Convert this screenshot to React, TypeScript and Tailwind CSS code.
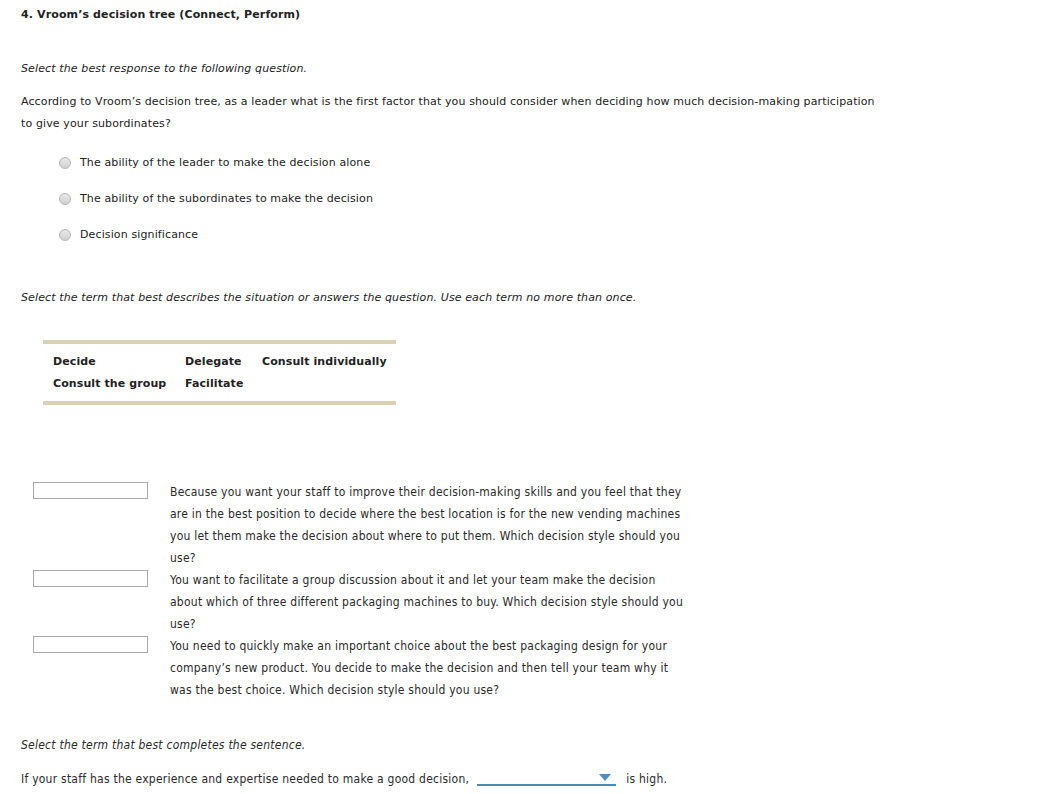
const VERDANA = "font-['DejaVu_Sans',Verdana,sans-serif] tracking-[0.12px]";

function Radio() {
  return (
    <span className="inline-block w-[12px] h-[12px] rounded-full border border-[#b4b4b4] bg-gradient-to-b from-[#e8e8e8] to-[#d2d2d2] shrink-0" />
  );
}

const options = [
  "The ability of the leader to make the decision alone",
  "The ability of the subordinates to make the decision",
  "Decision significance",
];

const matches = [
  [
    "Because you want your staff to improve their decision-making skills and you feel that they",
    "are in the best position to decide where the best location is for the new vending machines",
    "you let them make the decision about where to put them. Which decision style should you",
    "use?",
  ],
  [
    "You want to facilitate a group discussion about it and let your team make the decision",
    "about which of three different packaging machines to buy. Which decision style should you",
    "use?",
  ],
  [
    "You need to quickly make an important choice about the best packaging design for your",
    "company\u2019s new product. You decide to make the decision and then tell your team why it",
    "was the best choice. Which decision style should you use?",
  ],
];

export default function App() {
  return (
    <div className="w-[1054px] h-[794px] bg-white text-[#222] text-[11px] overflow-hidden">
      <div className={`${VERDANA} pl-[21px] pt-[7px]`}>
        <h1 className="font-bold text-[11px] leading-[16px]">4. Vroom’s decision tree (Connect, Perform)</h1>

        <p className="italic mt-[35px] leading-[22px]">Select the best response to the following question.</p>

        <p className="mt-[11px] leading-[22px] w-[862px]">
          According to Vroom’s decision tree, as a leader what is the first factor that you should consider when deciding how much decision-making participation to give your subordinates?
        </p>

        <div className="mt-[17px] pl-[38px] flex flex-col gap-[14px]">
          {options.map((o) => (
            <div key={o} className="flex items-center gap-[9px] h-[22px]">
              <Radio />
              <span>{o}</span>
            </div>
          ))}
        </div>

        <p className="italic mt-[41px] leading-[22px]">
          Select the term that best describes the situation or answers the question. Use each term no more than once.
        </p>

        <div className="ml-[22px] mt-[31px] w-[353px] border-t-[4px] border-b-[4px] border-[#d8d2b2] pt-[7px] pb-[6px] pl-[10px] font-bold tracking-[0.1px]">
          <div className="grid grid-cols-[132px_77px_auto] leading-[22px]">
            <span>Decide</span>
            <span>Delegate</span>
            <span>Consult individually</span>
            <span>Consult the group</span>
            <span>Facilitate</span>
          </div>
        </div>
      </div>

      <div className="font-['DejaVu_Sans_Condensed','DejaVu_Sans',sans-serif] text-[12px] tracking-[0.24px] text-[#2a2a2a] mt-[76px] pl-[33px]">
        {matches.map((lines, i) => (
          <div key={i} className="flex">
            <div className="w-[137px] shrink-0 pt-[1px]">
              <div className="w-[115px] h-[17px] border border-[#a9a9a9] bg-white" />
            </div>
            <div className="leading-[22px]">
              {lines.map((l) => (
                <div key={l}>{l}</div>
              ))}
            </div>
          </div>
        ))}

        <div className="-ml-[12px]">
          <p className="italic mt-[33px] leading-[22px]">Select the term that best completes the sentence.</p>
          <div className="mt-[12px] flex items-end leading-[22px]">
            <span>If your staff has the experience and expertise needed to make a good decision,</span>
            <span className="ml-[8px] w-[139px] h-[18px] border-b-2 border-[#4f88b3] relative mb-[4px]">
              <svg className="absolute right-[5px] top-[6px]" width="12" height="7" viewBox="0 0 12 7">
                <polygon points="0,0 12,0 6,7" fill="#4d8ec4" />
              </svg>
            </span>
            <span className="ml-[10px]">is high.</span>
          </div>
        </div>
      </div>
    </div>
  );
}
